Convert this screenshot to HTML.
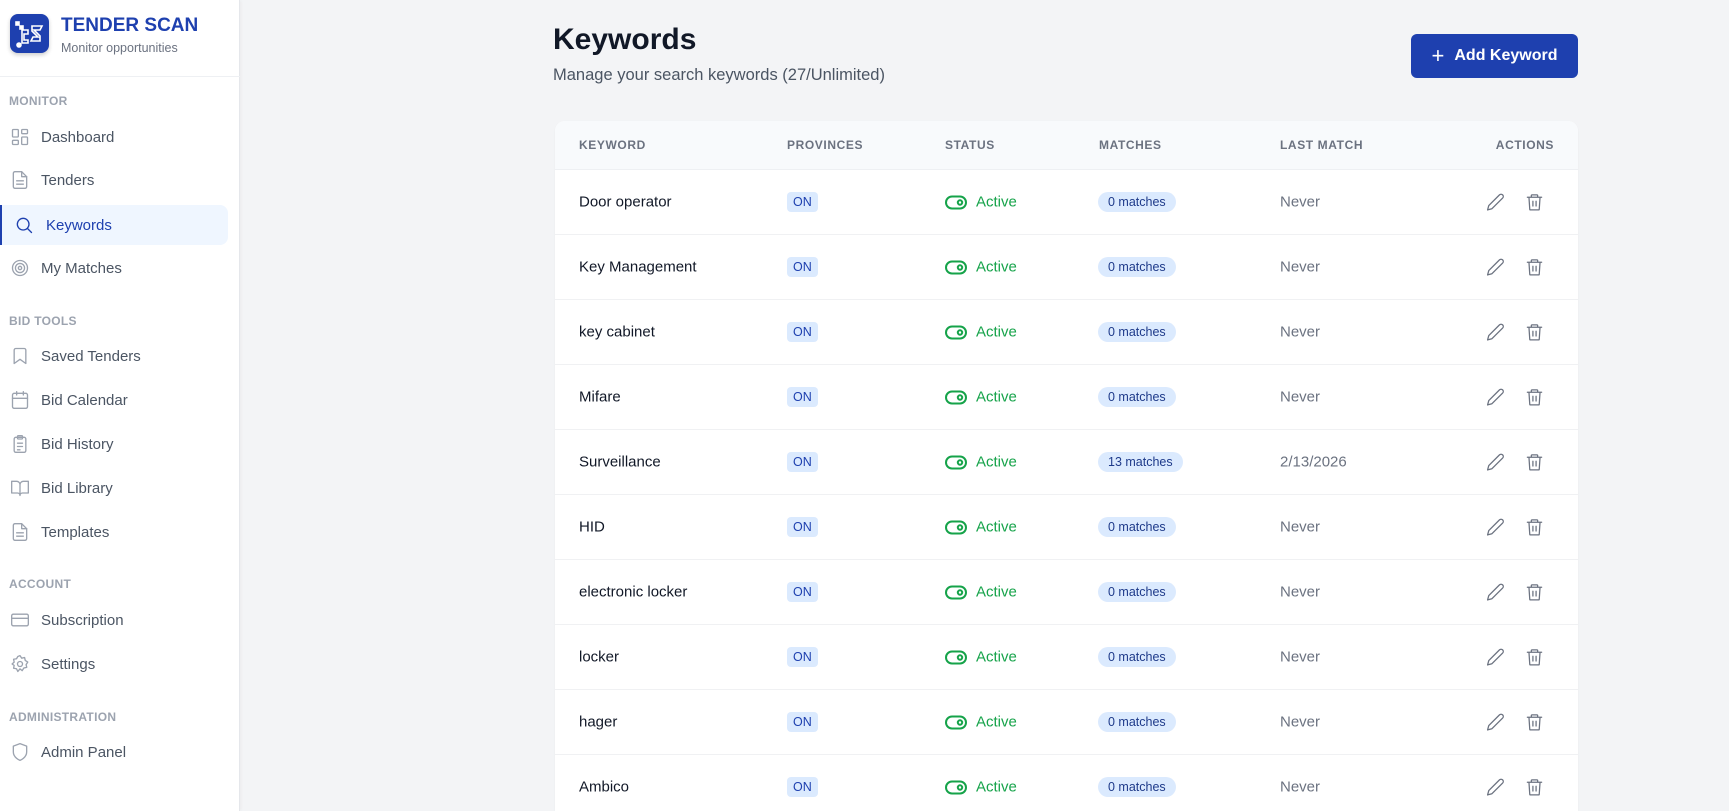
<!DOCTYPE html>
<html><head><meta charset="utf-8"><style>
*{box-sizing:border-box;margin:0;padding:0}
html{width:1729px;height:811px;overflow:hidden}
body{width:1729px;height:811px;overflow:hidden;background:#f3f4f6;font-family:"Liberation Sans",Arial,sans-serif;position:relative}
.sb{position:absolute;left:0;top:0;width:240px;height:811px;background:#fff;border-right:1px solid #e5e7eb;box-shadow:1px 0 3px rgba(0,0,0,.04)}
.logo{position:absolute;left:10px;top:14px;width:39px;height:39px;border-radius:8px;background:#1e40af;box-shadow:0 2px 4px rgba(0,0,0,.2)}
.t1{position:absolute;left:61px;top:15px;font-size:19px;font-weight:bold;color:#1e40af}
.t2{position:absolute;left:61px;top:41px;font-size:12.5px;color:#6b7280}
.div{position:absolute;left:0;top:76px;width:240px;height:1px;background:#eef0f3}
.sec{position:absolute;left:9px;font-size:12px;font-weight:bold;color:#9ca3af;letter-spacing:.3px}
.nav{position:absolute;left:0;width:228px;height:40px;display:flex;align-items:center;font-size:15px;color:#4b5563}
.nav svg{position:absolute;left:10px;width:20px;height:20px;fill:none;stroke:#9ca3af;stroke-width:1.6;stroke-linecap:round;stroke-linejoin:round}
.nav span{position:absolute;left:41px}
.nav.act{background:#eff6ff;border-radius:0 8px 8px 0;border-left:2px solid #1e40af;color:#1e40af}
.nav.act svg{stroke:#1e40af;left:12px}
.nav.act span{left:44px}
h1{position:absolute;left:553px;top:23px;font-size:30px;font-weight:bold;color:#111827}
.sub{position:absolute;left:553px;top:66px;font-size:16.5px;color:#4b5563}
.btn{position:absolute;left:1411px;top:34px;width:167px;height:44px;background:#1e40af;border-radius:6px;color:#fff;font-size:16px;font-weight:bold;display:flex;align-items:center;justify-content:center;gap:10px}
.card{position:absolute;left:555px;top:121px;width:1023px;height:690px;background:#fff;border-radius:10px 10px 0 0;overflow:hidden;box-shadow:0 1px 2px rgba(0,0,0,.04)}
.hd{position:absolute;left:0;top:0;width:100%;height:49px;background:#f8fafc;border-bottom:1px solid #eef0f3}
.hd div{position:absolute;top:17px;font-size:12px;font-weight:bold;color:#6b7280;letter-spacing:.6px}
.row{position:absolute;left:0;width:100%;height:65px;border-bottom:1px solid #f0f1f3}
.row>*{position:absolute;top:50%;transform:translateY(-50%)}
.kw{left:24px;font-size:15px;color:#111827}
.on{left:232px;background:#dbeafe;color:#1e40af;font-size:12.5px;padding:3px 6px;border-radius:4px}
.st{left:390px;display:flex;align-items:center;gap:9px;color:#16a34a;font-size:15px}
.mt{left:543px;background:#dbeafe;color:#1e3a8a;font-size:12.5px;padding:3px 10px;border-radius:10px}
.lm{left:725px;font-size:15px;color:#6b7280}
.ac{left:931px;display:flex;gap:20px}
.ac svg{width:19px;height:19px;fill:none;stroke:#6b7280;stroke-width:1.6;stroke-linecap:round;stroke-linejoin:round}
</style></head><body>
<div class="sb">
<div class="logo"><svg width="39" height="39" viewBox="0 0 39 39" fill="none" stroke="#fff" stroke-width="1.6"><rect x="6" y="8" width="3" height="3" fill="#fff"/><rect x="10" y="12" width="3" height="3" fill="#fff"/><path d="M12 16h6v4h-4v6h4v3h-6z"/><path d="M22 12h10l-2 4h-6l6 6v5H21l2-4h5l-6-6z"/><circle cx="9" cy="31" r="2" fill="#fff"/></svg></div>
<div class="t1">TENDER SCAN</div><div class="t2">Monitor opportunities</div>
<div class="div"></div>
<div class="sec" style="top:94px">MONITOR</div>
<div class="nav" style="top:117px"><svg viewBox="0 0 24 24"><rect x="3" y="3" width="7" height="9" rx="1"/><rect x="14" y="3" width="7" height="5" rx="1"/><rect x="14" y="12" width="7" height="9" rx="1"/><rect x="3" y="16" width="7" height="5" rx="1"/></svg><span>Dashboard</span></div>
<div class="nav" style="top:160px"><svg viewBox="0 0 24 24"><path d="M14 2H6a2 2 0 0 0-2 2v16a2 2 0 0 0 2 2h12a2 2 0 0 0 2-2V8z"/><path d="M14 2v6h6M8 13h8M8 17h8"/></svg><span>Tenders</span></div>
<div class="nav act" style="top:205px"><svg viewBox="0 0 24 24"><circle cx="11" cy="11" r="7"/><path d="M21 21l-4.5-4.5"/></svg><span>Keywords</span></div>
<div class="nav" style="top:248px"><svg viewBox="0 0 24 24"><circle cx="12" cy="12" r="9"/><circle cx="12" cy="12" r="5.5"/><circle cx="12" cy="12" r="2"/></svg><span>My Matches</span></div>
<div class="sec" style="top:314px">BID TOOLS</div>
<div class="nav" style="top:336px"><svg viewBox="0 0 24 24"><path d="M19 21l-7-5-7 5V5a2 2 0 0 1 2-2h10a2 2 0 0 1 2 2z"/></svg><span>Saved Tenders</span></div>
<div class="nav" style="top:380px"><svg viewBox="0 0 24 24"><rect x="3" y="4" width="18" height="18" rx="2"/><path d="M16 2v4M8 2v4M3 10h18"/></svg><span>Bid Calendar</span></div>
<div class="nav" style="top:424px"><svg viewBox="0 0 24 24"><rect x="5" y="4" width="14" height="18" rx="2"/><rect x="9" y="2" width="6" height="4" rx="1"/><path d="M9 11h6M9 15h6M9 19h3"/></svg><span>Bid History</span></div>
<div class="nav" style="top:468px"><svg viewBox="0 0 24 24"><path d="M2 4h6a4 4 0 0 1 4 4v13a3 3 0 0 0-3-3H2zM22 4h-6a4 4 0 0 0-4 4v13a3 3 0 0 1 3-3h7z"/></svg><span>Bid Library</span></div>
<div class="nav" style="top:512px"><svg viewBox="0 0 24 24"><path d="M14 2H6a2 2 0 0 0-2 2v16a2 2 0 0 0 2 2h12a2 2 0 0 0 2-2V8z"/><path d="M14 2v6h6M8 13h8M8 17h8"/></svg><span>Templates</span></div>
<div class="sec" style="top:577px">ACCOUNT</div>
<div class="nav" style="top:600px"><svg viewBox="0 0 24 24"><rect x="2" y="5" width="20" height="14" rx="2"/><path d="M2 10h20"/></svg><span>Subscription</span></div>
<div class="nav" style="top:644px"><svg viewBox="0 0 24 24"><circle cx="12" cy="12" r="3"/><path d="M12 2l2 3 3.5-.8.8 3.5 3 2-2 3 .8 3.3-3.5.8-2 3.2-2.6-2.2L9.4 21l-1.6-3.3-3.5-.6.7-3.4L2.5 12l2.5-2.3-.7-3.4 3.5-.6L9.4 3z"/></svg><span>Settings</span></div>
<div class="sec" style="top:710px">ADMINISTRATION</div>
<div class="nav" style="top:732px"><svg viewBox="0 0 24 24"><path d="M12 22s8-3 8-10V5l-8-3-8 3v7c0 7 8 10 8 10z"/></svg><span>Admin Panel</span></div>
</div>
<h1>Keywords</h1>
<div class="sub">Manage your search keywords (27/Unlimited)</div>
<div class="btn"><span style="font-size:22px;font-weight:normal;line-height:1">+</span><span>Add Keyword</span></div>
<div class="card">
<div class="hd"><div style="left:24px">KEYWORD</div><div style="left:232px">PROVINCES</div><div style="left:390px">STATUS</div><div style="left:544px">MATCHES</div><div style="left:725px">LAST MATCH</div><div style="right:24px">ACTIONS</div></div>
<div id="rows"></div>
</div>
<script>
var d=[["Door operator",0,"Never"],["Key Management",0,"Never"],["key cabinet",0,"Never"],["Mifare",0,"Never"],["Surveillance",13,"2/13/2026"],["HID",0,"Never"],["electronic locker",0,"Never"],["locker",0,"Never"],["hager",0,"Never"],["Ambico",0,"Never"]];
var h="";d.forEach(function(r,i){h+='<div class="row" style="top:'+(49+i*65)+'px"><div class="kw">'+r[0]+'</div><div class="on">ON</div><div class="st"><svg width="22" height="14" viewBox="0 0 22 14" fill="none" stroke="#16a34a" stroke-width="2"><rect x="1" y="1" width="20" height="12" rx="6"/><circle cx="15" cy="7" r="2.2"/></svg>Active</div><div class="mt">'+r[1]+' matches</div><div class="lm">'+r[2]+'</div><div class="ac"><svg viewBox="0 0 24 24"><path d="M17 3a2.8 2.8 0 0 1 4 4L7.5 20.5 2 22l1.5-5.5z"/></svg><svg viewBox="0 0 24 24"><path d="M3 6h18M8 6V4a1 1 0 0 1 1-1h6a1 1 0 0 1 1 1v2M5 6l1 15a1 1 0 0 0 1 1h10a1 1 0 0 0 1-1l1-15M10 11v6M14 11v6"/></svg></div></div>';});
document.getElementById("rows").innerHTML=h;
</script>
</body></html>
